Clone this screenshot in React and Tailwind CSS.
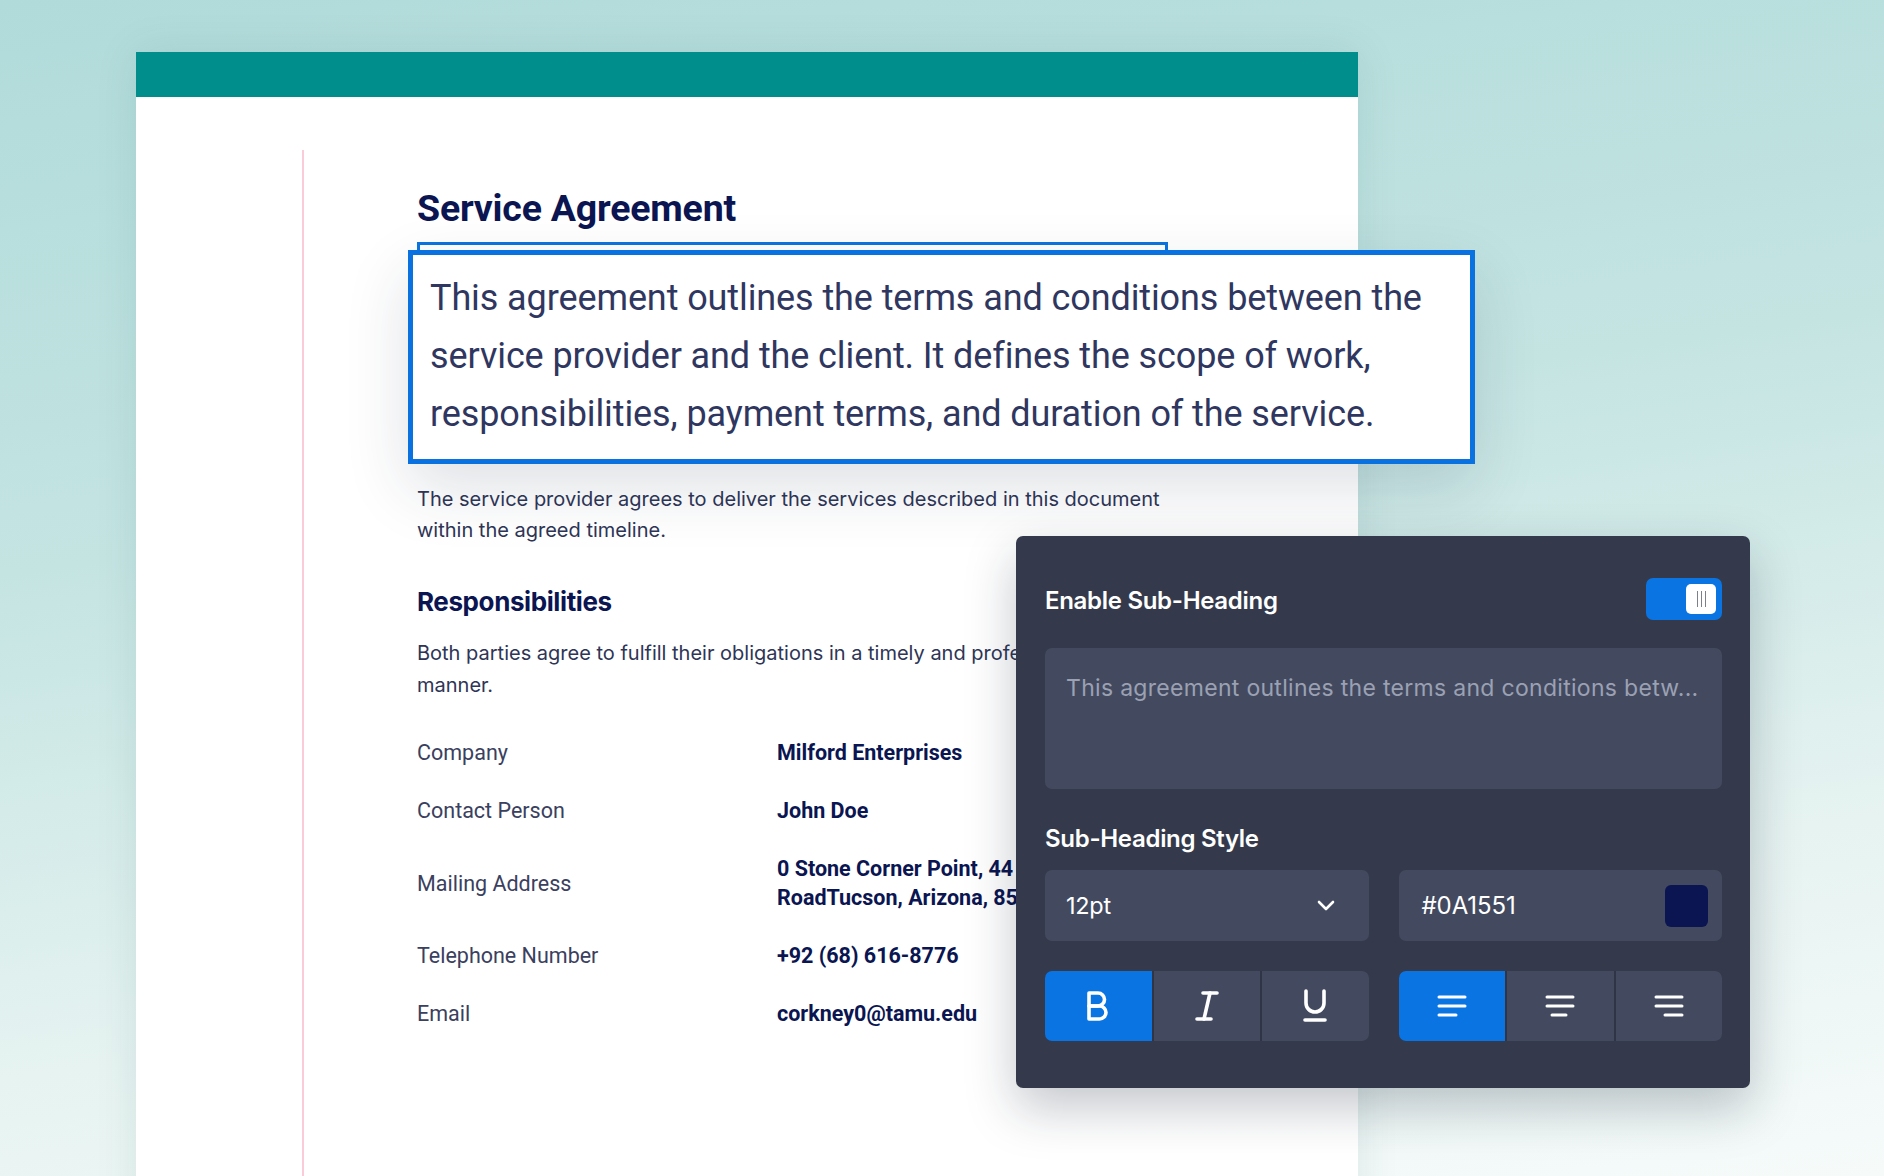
import React from "react";

function BoldIcon() {
  return (
    <svg width="26" height="32" viewBox="0 0 26 32" fill="none" stroke="white" strokeWidth="3.6" strokeLinecap="round" strokeLinejoin="round">
      <path d="M4 3h9a6.5 6.5 0 0 1 0 13H4z" />
      <path d="M4 16h10.5a6.5 6.5 0 0 1 0 13H4z" />
    </svg>
  );
}
function ItalicIcon() {
  return (
    <svg width="26" height="32" viewBox="0 0 26 32" fill="none" stroke="white" strokeWidth="3.6" strokeLinecap="round" strokeLinejoin="round">
      <path d="M9 3h14" />
      <path d="M3 29h14" />
      <path d="M16 3l-6 26" />
    </svg>
  );
}
function UnderlineIcon() {
  return (
    <svg width="26" height="34" viewBox="0 0 26 34" fill="none" stroke="white" strokeWidth="3.6" strokeLinecap="round" strokeLinejoin="round">
      <path d="M4 2v12a9 9 0 0 0 18 0V2" />
      <path d="M3 31h20" />
    </svg>
  );
}
function AlignIcon({ kind }) {
  const bottom =
    kind === "left" ? "M2 20h17" : kind === "center" ? "M7 20h14" : "M11 20h17";
  return (
    <svg width="30" height="22" viewBox="0 0 30 22" fill="none" stroke="white" strokeWidth="3" strokeLinecap="round">
      <path d="M2 2h26" />
      <path d="M2 11h26" />
      <path d={bottom} />
    </svg>
  );
}

const rows = [
  { label: "Company", value: "Milford Enterprises" },
  { label: "Contact Person", value: "John Doe" },
  {
    label: "Mailing Address",
    value: (
      <>
        0 Stone Corner Point, 44 Golf Course
        <br />
        RoadTucson, Arizona, 85705
      </>
    ),
  },
  { label: "Telephone Number", value: "+92 (68) 616-8776" },
  { label: "Email", value: "corkney0@tamu.edu" },
];

export default function App() {
  return (
    <div className="relative w-[1884px] h-[1176px] overflow-hidden bg-[linear-gradient(172deg,#b0dbda_0%,#c4e4e2_40%,#e6f3f1_75%,#f6fbfa_100%)] pt-[52px] pl-[136px] font-['Roboto',sans-serif]">
      {/* Document page */}
      <div className="w-[1222px] h-[1200px] bg-white flex flex-col shadow-[0_0_40px_rgba(20,80,80,0.10)]">
        <div className="h-[45px] bg-[#008e8c]" />
        <div className="flex flex-1 pl-[166px] pt-[53px]">
          <div className="w-[2px] shrink-0 bg-[#f9ccd7]" />
          <div className="pl-[113px] pt-[36px]">
            <h1 className="text-[37.5px] leading-[44px] font-bold text-[#0a1551] tracking-[-0.2px]">
              Service Agreement
            </h1>

            <div className="relative mt-[12px] pt-[8px]">
              <div className="absolute left-0 top-0 w-[751px] h-[30px] border-[3px] border-[#0b74e0] bg-white" />
              <div className="relative -ml-[9px] w-[1067px] border-[5px] border-[#0a72e0] bg-white pl-[17px] pt-[14px] pb-[16px] shadow-[0_24px_60px_rgba(30,40,70,0.14)]">
                <p className="text-[36px] leading-[58px] text-[#2f3760] tracking-[-0.1px] whitespace-nowrap">
                  This agreement outlines the terms and conditions between the
                  <br />
                  service provider and the client. It defines the scope of work,
                  <br />
                  responsibilities, payment terms, and duration of the service.
                </p>
              </div>
            </div>

            <p className="mt-[20px] w-[820px] font-['Inter',sans-serif] text-[20px] leading-[31px] text-[#2e3556] whitespace-nowrap">
              The service provider agrees to deliver the services described in this document
              <br />
              within the agreed timeline.
            </p>

            <h2 className="mt-[40px] font-['Inter',sans-serif] text-[26px] leading-[32px] font-bold text-[#0a1551] tracking-[-0.4px]">
              Responsibilities
            </h2>
            <p className="mt-[19px] w-[820px] font-['Inter',sans-serif] text-[20px] leading-[32px] text-[#2e3556] whitespace-nowrap">
              Both parties agree to fulfill their obligations in a timely and professional
              <br />
              manner.
            </p>

            <div className="mt-[37px] flex flex-col gap-[29px]">
              {rows.map((r) => (
                <div key={r.label} className="flex items-center">
                  <div className="w-[360px] text-[21.5px] leading-[29px] text-[#3a405e]">
                    {r.label}
                  </div>
                  <div className="text-[21.5px] leading-[29px] font-bold text-[#0a1551] whitespace-nowrap">
                    {r.value}
                  </div>
                </div>
              ))}
            </div>
          </div>
        </div>
      </div>

      {/* Floating settings panel */}
      <div className="absolute left-[1016px] top-[536px] w-[734px] h-[552px] rounded-[7px] bg-[#343a4b] pl-[29px] pr-[28px] pt-[42px] font-['Inter',sans-serif] shadow-[0_20px_50px_rgba(20,30,50,0.25)]">
        <div className="flex items-center justify-between h-[42px]">
          <span className="text-[24px] font-semibold text-white tracking-[-0.3px] mt-[3px]">
            Enable Sub-Heading
          </span>
          <div className="w-[76px] h-[42px] rounded-[7px] bg-[#0a74e2] flex items-center justify-end pr-[6px]">
            <div className="w-[30px] h-[30px] rounded-[5px] bg-white flex items-center justify-center gap-[3px]">
              <span className="w-px h-[16px] bg-[#7a8090]" />
              <span className="w-px h-[16px] bg-[#7a8090]" />
              <span className="w-px h-[16px] bg-[#7a8090]" />
            </div>
          </div>
        </div>

        <div className="mt-[28px] h-[141px] rounded-[7px] bg-[#434a60] pl-[21px] pt-[24px]">
          <p className="text-[23px] leading-[32px] text-[#9ba1b3] tracking-[0.3px] whitespace-nowrap">
            This agreement outlines the terms and conditions betw...
          </p>
        </div>

        <div className="mt-[34px] text-[24px] leading-[32px] font-semibold text-white tracking-[-0.3px]">
          Sub-Heading Style
        </div>

        <div className="mt-[15px] grid grid-cols-2 gap-[30px]">
          <div className="h-[71px] rounded-[7px] bg-[#434a60] flex items-center justify-between pl-[21px] pr-[34px]">
            <span className="text-[23.5px] text-white tracking-[-0.3px]">12pt</span>
            <svg width="18" height="11" viewBox="0 0 18 11" fill="none" stroke="white" strokeWidth="2.6" strokeLinecap="round" strokeLinejoin="round">
              <path d="M2 2l7 7 7-7" />
            </svg>
          </div>
          <div className="h-[71px] rounded-[7px] bg-[#434a60] flex items-center justify-between pl-[23px] pr-[14px]">
            <span className="text-[24px] text-white tracking-[-0.1px]">#0A1551</span>
            <div className="w-[43px] h-[42px] rounded-[6px] bg-[#0a1551]" />
          </div>
        </div>

        <div className="mt-[30px] grid grid-cols-2 gap-[30px]">
          <div className="h-[70px] rounded-[7px] overflow-hidden flex gap-[2px] bg-[#2f3545]">
            <div className="flex-1 bg-[#0a74e2] flex items-center justify-center">
              <BoldIcon />
            </div>
            <div className="flex-1 bg-[#434a60] flex items-center justify-center">
              <ItalicIcon />
            </div>
            <div className="flex-1 bg-[#434a60] flex items-center justify-center">
              <UnderlineIcon />
            </div>
          </div>
          <div className="h-[70px] rounded-[7px] overflow-hidden flex gap-[2px] bg-[#2f3545]">
            <div className="flex-1 bg-[#0a74e2] flex items-center justify-center">
              <AlignIcon kind="left" />
            </div>
            <div className="flex-1 bg-[#434a60] flex items-center justify-center">
              <AlignIcon kind="center" />
            </div>
            <div className="flex-1 bg-[#434a60] flex items-center justify-center">
              <AlignIcon kind="right" />
            </div>
          </div>
        </div>
      </div>
    </div>
  );
}
